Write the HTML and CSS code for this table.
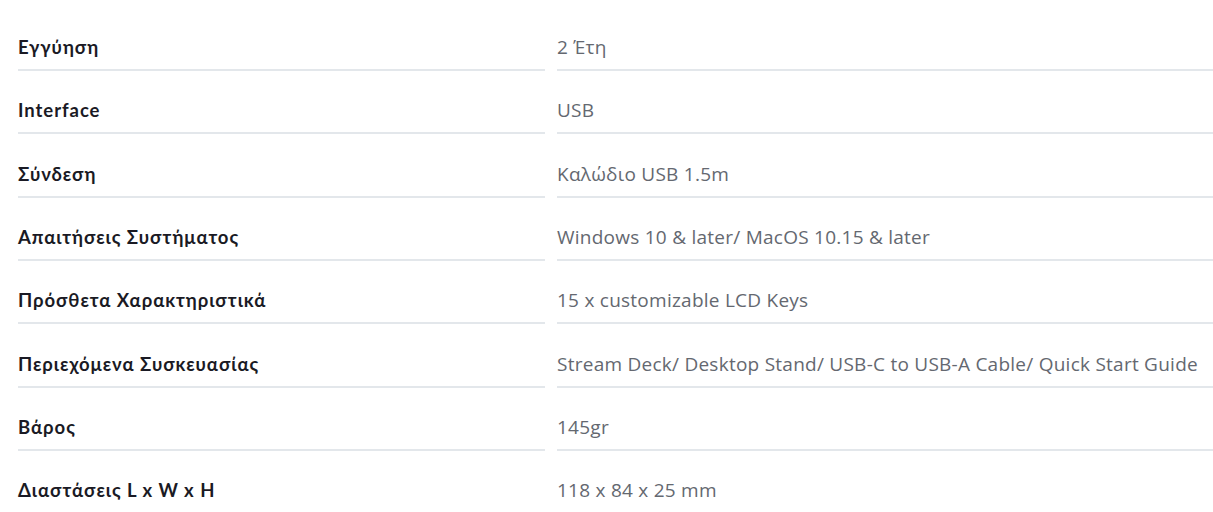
FILE: index.html
```html
<!DOCTYPE html>
<html lang="el">
<head>
<meta charset="utf-8">
<link rel="stylesheet" href="styles.css">
</head>
<body>
<div class="specs">
  <div class="row"><div class="label">Εγγύηση</div><div class="value">2 Έτη</div></div>
  <div class="row"><div class="label">Interface</div><div class="value">USB</div></div>
  <div class="row"><div class="label">Σύνδεση</div><div class="value">Καλώδιο USB 1.5m</div></div>
  <div class="row"><div class="label">Απαιτήσεις Συστήματος</div><div class="value">Windows 10 &amp; later/ MacOS 10.15 &amp; later</div></div>
  <div class="row"><div class="label">Πρόσθετα Χαρακτηριστικά</div><div class="value">15 x customizable LCD Keys</div></div>
  <div class="row"><div class="label">Περιεχόμενα Συσκευασίας</div><div class="value">Stream Deck/ Desktop Stand/ USB-C to USB-A Cable/ Quick Start Guide</div></div>
  <div class="row"><div class="label">Βάρος</div><div class="value">145gr</div></div>
  <div class="row"><div class="label">Διαστάσεις L x W x H</div><div class="value">118 x 84 x 25 mm</div></div>
</div>
</body>
</html>
```
FILE: styles.css
```css
html, body {
  margin: 0;
  padding: 0;
  background: #ffffff;
}
body {
  padding: 7.7px 0 0 18px;
}
.specs {
  display: flex;
  flex-direction: column;
}
.row {
  display: grid;
  grid-template-columns: 527px 656px;
  column-gap: 12px;
}
.label, .value {
  box-sizing: border-box;
  height: 63.33px;
  border-bottom: 2px solid #e3e7eb;
  display: flex;
  align-items: flex-end;
  padding-bottom: 10px;
  line-height: 24px;
  white-space: nowrap;
}
.label {
  font-family: "Lato", "Noto Sans", sans-serif;
  font-weight: 700;
  font-size: 18.5px;
  letter-spacing: 0.95px;
  color: #1a1a24;
}
.value {
  font-family: "Open Sans", "Noto Sans", sans-serif;
  font-size: 19px;
  letter-spacing: 0.25px;
  color: #646870;
}
```
